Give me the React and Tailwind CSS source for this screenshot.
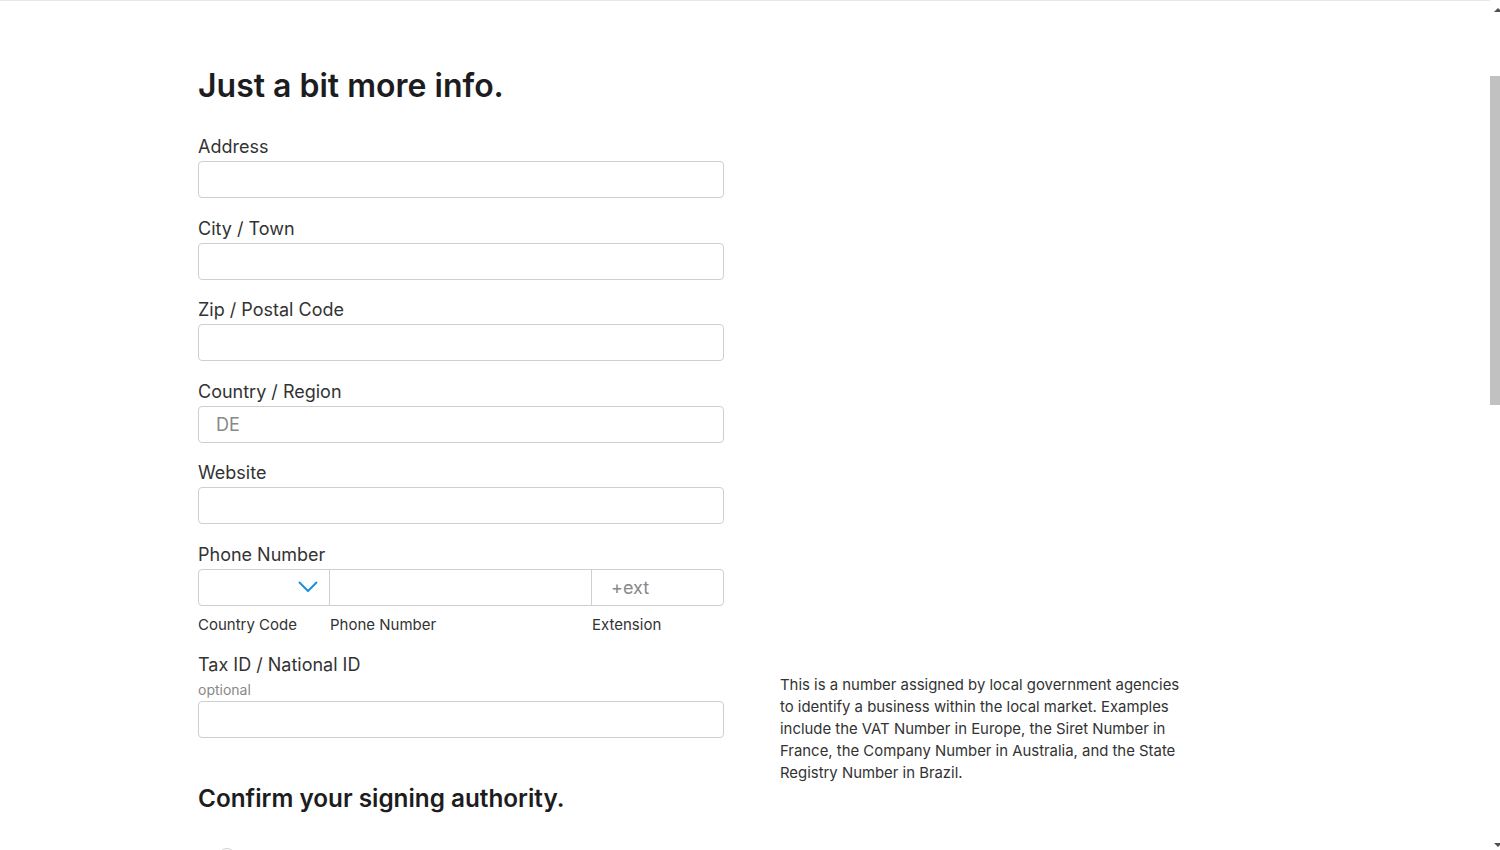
const fields = [
  { label: 'Address' },
  { label: 'City / Town' },
  { label: 'Zip / Postal Code' },
  { label: 'Country / Region', value: 'DE' },
  { label: 'Website' },
];

const TextField = ({ label, value }) => (
  <div className="flex flex-col">
    <label className="text-[18px] leading-[24px] text-[#333] mb-[2px]">{label}</label>
    <div className="h-[37px] w-[526px] rounded-[4px] border border-[#cfcfcf] bg-white flex items-center px-[17px] text-[18px] text-[#888]">
      {value}
    </div>
  </div>
);

const App = () => {
  return (
    <div className="h-[850px] overflow-hidden bg-white border-t border-[#e6e6e6] font-['Inter','Noto_Sans',sans-serif] text-[#333]">
      <div className="pl-[198px] pt-[65px]">
        <h1 className="text-[32px] leading-[40px] font-semibold text-[#1d1d1f]">Just a bit more info.</h1>

        <div className="mt-[29px] flex flex-col gap-[18.5px]">
          {fields.map(f => (
            <TextField key={f.label} label={f.label} value={f.value} />
          ))}

          {/* Phone */}
          <div className="flex flex-col">
            <label className="text-[18px] leading-[24px] text-[#333] mb-[2px]">Phone Number</label>
            <div className="h-[37px] w-[526px] rounded-[4px] border border-[#cfcfcf] bg-white flex">
              <div className="w-[131px] border-r border-[#cfcfcf] flex items-center justify-end pr-[11px]">
                <svg width="20" height="12" viewBox="0 0 20 12" fill="none">
                  <path d="M1.5 1.5 L10 10 L18.5 1.5" stroke="#1b8fde" strokeWidth="2" strokeLinecap="round" strokeLinejoin="round" />
                </svg>
              </div>
              <div className="w-[262px] border-r border-[#cfcfcf]" />
              <div className="flex-1 flex items-center pl-[19px] text-[18px] text-[#888]">+ext</div>
            </div>
            <div className="flex text-[15px] leading-[20px] text-[#333] mt-[9px]">
              <span className="w-[132px]">Country Code</span>
              <span className="w-[262px]">Phone Number</span>
              <span>Extension</span>
            </div>
          </div>

          {/* Tax ID */}
          <div className="flex items-start">
            <div className="flex flex-col">
              <label className="text-[18px] leading-[24px] text-[#333]">Tax ID / National ID</label>
              <span className="mt-[4px] mb-[2px] text-[14px] leading-[18px] text-[#888]">optional</span>
              <div className="h-[37px] w-[526px] rounded-[4px] border border-[#cfcfcf] bg-white" />
            </div>
            <p className="ml-[56px] pt-[21px] w-[404px] text-[14.9px] leading-[22px] text-[#333]">
              This is a number assigned by local government agencies to identify a business within the local market. Examples include the VAT Number in Europe, the Siret Number in France, the Company Number in Australia, and the State Registry Number in Brazil.
            </p>
          </div>
        </div>

        <h2 className="mt-[-2px] text-[24.3px] leading-[32px] font-semibold text-[#1d1d1f]">Confirm your signing authority.</h2>

        <div className="mt-[34px] ml-[20px] w-[18px] h-[18px] rounded-full border border-[#d0d0d0]" />
      </div>

      {/* scrollbar */}
      <div className="fixed right-0 top-0 h-[850px] w-[10px] bg-white">
        <div className="absolute right-0 top-[8px] w-0 h-0 border-l-[4px] border-r-[4px] border-b-[4px] border-l-transparent border-r-transparent border-b-[#505050] mr-[-2px]" />
        <div className="absolute right-0 top-[76px] h-[329px] w-[10px] bg-[#c1c1c1]" />
        <div className="absolute right-0 bottom-[3px] w-0 h-0 border-l-[4px] border-r-[4px] border-t-[4px] border-l-transparent border-r-transparent border-t-[#505050] mr-[-2px]" />
      </div>
    </div>
  );
};

export default App;
